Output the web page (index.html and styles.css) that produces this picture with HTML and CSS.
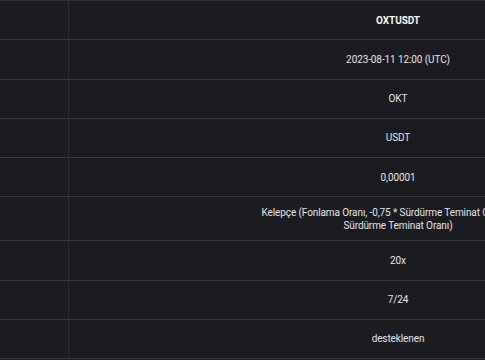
FILE: index.html
```html
<!DOCTYPE html>
<html lang="tr">
<head>
<meta charset="utf-8">
<title>OXTUSDT</title>
<link rel="stylesheet" href="styles.css">
</head>
<body>
<div class="viewport">
<table class="spec">
  <tbody>
    <tr><td class="label"></td><td class="value strong">OXTUSDT</td></tr>
    <tr><td class="label"></td><td class="value">2023-08-11 12:00 (UTC)</td></tr>
    <tr><td class="label"></td><td class="value">OKT</td></tr>
    <tr><td class="label"></td><td class="value">USDT</td></tr>
    <tr><td class="label"></td><td class="value">0,00001</td></tr>
    <tr><td class="label"></td><td class="value multi">Kelepçe (Fonlama Oranı, -0,75 * Sürdürme Teminat Oranı, 0,75 *<br>Sürdürme Teminat Oranı)</td></tr>
    <tr><td class="label"></td><td class="value">20x</td></tr>
    <tr><td class="label"></td><td class="value">7/24</td></tr>
    <tr><td class="label"></td><td class="value">desteklenen</td></tr>
  </tbody>
</table>
</div>
</body>
</html>
```
FILE: styles.css
```css
html, body {
  margin: 0;
  padding: 0;
  background: #1b1c20;
}
.viewport {
  width: 485px;
  height: 360px;
  overflow: hidden;
}
.spec {
  border-collapse: collapse;
  table-layout: fixed;
  width: 727px;
  font-family: Roboto, "Liberation Sans", sans-serif;
  font-size: 10px;
  line-height: 13px;
  letter-spacing: -0.1px;
  color: #e3e4e7;
  border-top: 1px solid #303137;
}
.spec tr {
  height: 39.25px;
  border-bottom: 1px solid #3a3b40;
}
.spec td {
  padding: 8.5px 0;
  vertical-align: middle;
}
.label {
  width: 68px;
  border-right: 1px solid #2c2d32;
}
.value {
  text-align: center;
}
.strong {
  font-weight: 700;
  color: #f4f5f7;
}
```
